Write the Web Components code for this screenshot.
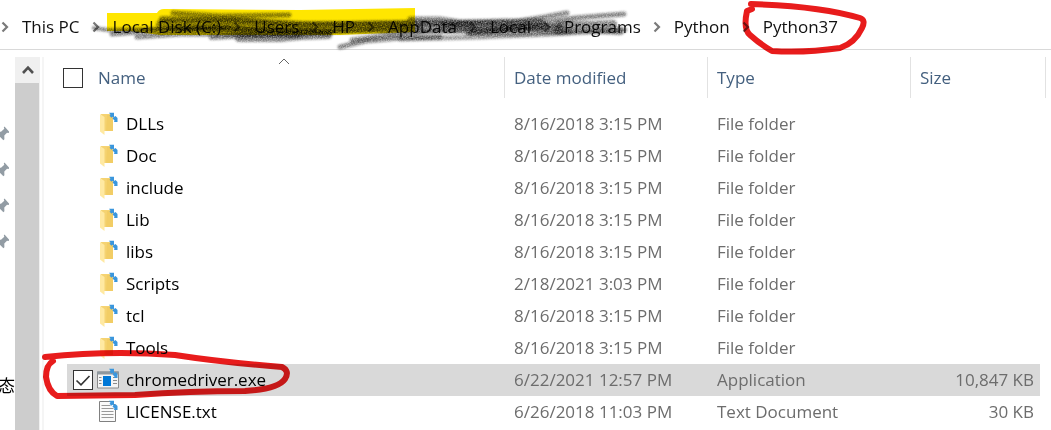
<!DOCTYPE html>
<html lang="en">
<head>
<meta charset="utf-8">
<meta name="viewport" content="width=device-width, initial-scale=1">
<title>Python37</title>
<style>
body { margin: 0; background: #fff; font: 17px/32px "Open Sans", "Noto Sans CJK SC", sans-serif; color: #000; }
</style>
</head>
<body>
<explorer-window>
  <path-bar slot="path">
    <path-item>This PC</path-item>
    <path-item>Local Disk (C:)</path-item>
    <path-item>Users</path-item>
    <path-item>HP</path-item>
    <path-item>AppData</path-item>
    <path-item>Local</path-item>
    <path-item>Programs</path-item>
    <path-item>Python</path-item>
    <path-item>Python37</path-item>
  </path-bar>
  <quick-access slot="side"></quick-access>
  <scroll-rail slot="rail"></scroll-rail>
  <file-list></file-list>
  <ink-layer slot="ink"></ink-layer>
</explorer-window>

<script>
function define(name, html, setup) {
  const template = document.createElement('template');
  template.innerHTML = html;
  customElements.define(name, class extends HTMLElement {
    constructor() {
      super();
      this.attachShadow({ mode: 'open' }).append(template.content.cloneNode(true));
    }
    connectedCallback() { if (setup) setup(this, this.shadowRoot); }
  });
}

define('explorer-window', `
<style>
:host { display: flex; flex-direction: column; position: relative; min-height: 100vh; overflow: hidden; }
header { border-bottom: 1px solid #d9d9d9; }
.body { flex: 1; display: grid; grid-template-columns: 15px 25px minmax(0, 1fr); padding-top: 7px; }
main { margin-left: 2px; border-left: 2px solid #f5f5f5; padding: 0 5px 0 19px; }
</style>
<header><slot name="path"></slot></header>
<div class="body">
  <slot name="side"></slot>
  <slot name="rail"></slot>
  <main><slot></slot></main>
</div>
<slot name="ink"></slot>`);

define('path-bar', `
<style>
:host { display: block; }
nav { display: flex; padding: 11px 0 6px 1px; white-space: nowrap; }
</style>
<nav aria-label="Path"><slot></slot></nav>`);

define('path-item', `
<style>
:host { display: flex; align-items: center; }
svg { width: 8px; height: 12px; margin-right: 13px; }
a { color: #111; text-decoration: none; margin-right: 12px; }
</style>
<svg viewBox="0 0 8 12" fill="none" stroke="#7a7a7a" stroke-width="2.2" aria-hidden="true"><path d="M1.5 1.5 6 6 1.5 10.5"/></svg>
<a href="#"><slot></slot></a>`);

define('quick-access', `
<style>
:host { display: flex; flex-direction: column; overflow: hidden; padding-top: 59px; }
svg { width: 12px; height: 16px; margin: 10px 0 10px -3px; }
.pins { display: grid; }
.label { height: 32px; display: flex; justify-content: flex-end; margin-top: 39px; padding-right: 14px; color: #003a8c; }
.label + .label { padding-right: 0; color: #000; }
</style>
<div class="pins"></div>
<div class="label"><span>n</span></div>
<div class="label"><span>态</span></div>`, (el, root) => {
  root.querySelector('.pins').innerHTML = `<svg viewBox="0 0 12 16" fill="#929ca4" aria-hidden="true"><path d="M7.5 0.5 12.5 6 11.5 7 10 6.8 7.3 9.5 7.4 13.2 6.4 14.2 3.2 11 0 14.2V10.5L1.5 9 0 7.6 0 5.6 4 5.7 7.3 2.8 6.8 1.4Z"/></svg>`.repeat(4);
});

define('scroll-rail', `
<style>
:host { display: flex; flex-direction: column; background: #f0f0f0; }
button { border: 0; padding: 0; height: 26px; background: #f0f0f0; display: grid; place-items: center; }
svg { width: 12px; height: 10px; }
.thumb { flex: 1; background: #cdcdcd; margin-right: 1px; }
</style>
<button aria-label="Scroll up"><svg viewBox="0 0 12 10" fill="none" stroke="#505050" stroke-width="2.6"><path d="M1 8 6 2.7 11 8"/></svg></button>
<div class="thumb"></div>`);

const sync = `<g fill="#3a96dd"><path d="M10 -.3h5v5l-1.500-1-1 1-2-2 1-1z"/><path d="M14.500 4.200l2-1.200 2 2v4h-3.500l.5-1.500-2-2z"/></g>`;
const icons = {
  folder: `<path d="M2 1h10l2 3v14H4z" fill="#f5d372"/><path d="M8 2h6v16H7z" fill="#f0c95e" opacity=".6"/><path d="M1 1l4.5 3v18L1 18.5z" fill="#ffe9a2"/>`,
  app: `<path d="M-1.5 3h21v16h-21z" fill="#f4f4f4" stroke="#8a8a8a"/><path d="M-2 2.5h22v3H-2z" fill="#8e979e"/><path d="M4 7h8v10H4z" fill="#0078d7"/><path d="M0 8.5h2.500M0 11.500h2.500M0 14.500h2.500M14 8.500h4M14 11.500h4M14 14.500h4" stroke="#8a8a8a"/>`,
  text: `<path d="M.5 .5h12l4 4v16H.5z" fill="#fafafa" stroke="#808080"/><path d="M2.500 4.500h9M2.500 7.500h12M2.500 10.500h12M2.500 13.500h12M2.500 16.500h12" stroke="#999"/>`
};
define('file-icon', `
<style>
:host { display: block; width: 18px; height: 22px; }
svg { display: block; width: 18px; height: 22px; overflow: visible; }
</style><svg viewBox="0 0 18 22" aria-hidden="true"></svg>`, (el, root) => {
  root.querySelector('svg').innerHTML = icons[el.getAttribute('kind')] + sync;
});

const files = [
  ...['DLLs', 'Doc', 'include', 'Lib', 'libs'].map(n => [n, '8/16/2018 3:15 PM', 'File folder', '', 'folder']),
  ['Scripts', '2/18/2021 3:03 PM', 'File folder', '', 'folder'],
  ['tcl', '8/16/2018 3:15 PM', 'File folder', '', 'folder'],
  ['Tools', '8/16/2018 3:15 PM', 'File folder', '', 'folder'],
  ['chromedriver.exe', '6/22/2021 12:57 PM', 'Application', '10,847 KB', 'app'],
  ['LICENSE.txt', '6/26/2018 11:03 PM', 'Text Document', '30 KB', 'text']
];
define('file-list', `
<style>
:host { display: block; }
table { width: 100%; table-layout: fixed; border-collapse: separate; border-spacing: 0; white-space: nowrap; }
.wide { width: 203px; }
.size { width: 135px; }
th { position: relative; height: 41px; padding: 0; border-right: 1px solid #e2e2e2; text-align: left; font-weight: 400; }
th button { border: 0; background: none; padding: 0 0 0 9px; font: inherit; color: #44607f; vertical-align: middle; }
th:first-child button { padding-left: 15px; }
.sort { position: absolute; left: 50%; top: 1px; width: 12px; height: 7px; margin-left: -6px; }
input { appearance: none; box-sizing: border-box; width: 20px; height: 20px; margin: 0; border: 1px solid #333; background: #fff; vertical-align: middle; display: inline-grid; place-items: center; }
.tick { display: grid; width: 20px; height: 20px; }
.tick > * { grid-area: 1 / 1; }
.tick svg { z-index: 1; width: 20px; height: 20px; pointer-events: none; }
tbody::before { content: ""; display: block; height: 10px; }
td { height: 32px; padding: 0 0 0 9px; color: #6d6d6d; background-clip: padding-box; }
td:first-child { border-left: 4px solid transparent; padding-left: 6px; color: #000; }
td:last-child { border-right: 6px solid transparent; padding-right: 6px; text-align: right; }
.selected td { background-color: #d9d9d9; }
.name { display: grid; grid-template-columns: 20px 18px 1fr; align-items: center; column-gap: 6px; }
.name span { padding-left: 3px; }
</style>
<table>
  <colgroup><col><col class="wide"><col class="wide"><col class="size"></colgroup>
  <thead><tr>
    <th scope="col"><input type="checkbox" aria-label="Select all"><button>Name</button>
      <svg class="sort" viewBox="0 0 12 7" fill="none" stroke="#666" aria-hidden="true"><path d="M1 6 6 1 11 6"/></svg></th>
    <th scope="col"><button>Date modified</button></th>
    <th scope="col"><button>Type</button></th>
    <th scope="col"><button>Size</button></th>
  </tr></thead>
  <tbody></tbody>
</table>`, (el, root) => {
  root.querySelector('tbody').innerHTML = files.map(([name, date, type, size, kind]) => {
    const selected = kind === 'app';
    const tick = selected ? `<div class="tick"><input type="checkbox" checked aria-label="${name}"><svg viewBox="0 0 20 20" fill="none" stroke="#333" stroke-width="1.6"><path d="M3.500 10.500 8 14.800 16.500 6"/></svg></div>` : '<div></div>';
    return `<tr class="${selected ? 'selected' : ''}"><td><div class="name">${tick}<file-icon kind="${kind}"></file-icon><span>${name}</span></div></td><td>${date}</td><td>${type}</td><td>${size}</td></tr>`;
  }).join('');
});

define('ink-layer', `
<style>
:host { position: absolute; inset: 0; pointer-events: none; mix-blend-mode: multiply; }
svg { display: block; width: 100%; height: 100%; }
</style>
<svg fill="none" stroke-linecap="round" stroke-linejoin="round" aria-hidden="true">
  <filter id="grain" x="-5%" y="-30%" width="110%" height="160%">
    <feTurbulence type="fractalNoise" baseFrequency=".8" numOctaves="2" result="n"/>
    <feColorMatrix in="n" values="0 0 0 0 0  0 0 0 0 0  0 0 0 0 0  0 0 0 1 .35" result="m"/>
    <feGaussianBlur in="SourceGraphic" stdDeviation=".8" result="b"/>
    <feComposite in="b" in2="m" operator="in"/>
  </filter>
  <path fill="#ffe600" d="M107 13H157Q159 9 164 9L300 10 415 8V32L340 35H160L130 31H107Z"/>
  <g stroke="#000" filter="url(#grain)">
    <g stroke-opacity=".5">
      <path stroke-width="4" d="M94 28 108 30 150 29 230 27"/>
      <path stroke-width="5" d="M112 34 150 31 210 28 330 32"/>
      <path stroke-width="5" d="M137 37 180 34 240 34 300 36"/>
      <path stroke-width="5" d="M173 13 220 16 289 15"/>
      <path stroke-width="6" d="M162 19 230 20 300 24 350 24 410 23 470 24"/>
      <path stroke-width="12" d="M162 25 230 24 310 28 390 27 480 26 540 24"/>
      <path stroke-width="5" d="M180 29 250 30 340 31 420 27"/>
      <path stroke-width="5" d="M410 19 440 19 460 22 520 21 545 17 567 13"/>
      <path stroke-width="5" d="M624 14 575 18 535 24 500 30 468 33"/>
      <path stroke-width="8" d="M560 25 590 25 613 24M558 31 585 29 620 31"/>
      <path stroke-width="8" d="M445 25 500 26 560 28"/>
      <path stroke-width="6" d="M212 37 230 36 270 34 330 33"/>
      <path stroke-width="8" d="M239 38 280 38 300 36 328 35"/>
      <path stroke-width="5" d="M340 47 365 41 400 38 440 37"/>
      <path stroke-width="5" d="M352 40 390 35 430 31 490 31 560 26"/>
    </g>
    <g stroke-opacity=".4">
      <path stroke-width="5" d="M400 39 480 37 550 34 625 30"/>
      <path stroke-width="6" d="M470 33 520 33 570 31"/>
    </g>
  </g>
  <g stroke="#e81c1c" stroke-width="6">
    <path d="M752 9 747 11Q743 29 750 35 760 44 772 51 805 53 840 48 855 43 862 28 866 20 860 18 820 6 751 4"/>
    <path d="M45 357Q110 350 175 355 220 362 282 367 290 371 285 379 278 389 245 391 190 391 135 395L57 396Q48 391 46 377 46 365 53 361"/>
  </g>
</svg>`);
</script>
</body>
</html>
